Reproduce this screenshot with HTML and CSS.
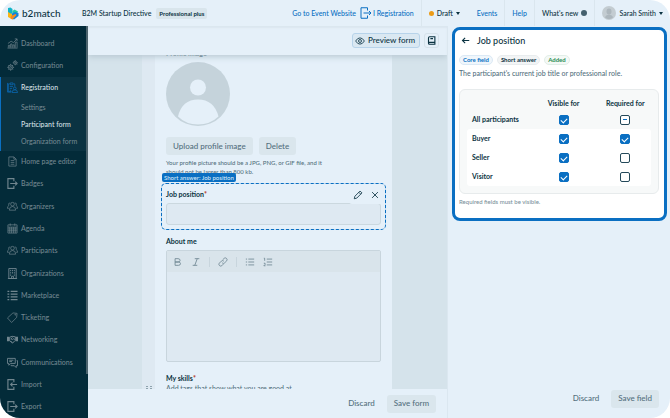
FILE: index.html
```html
<!DOCTYPE html>
<html lang="en">
<head>
    <meta charset="UTF-8">
    <meta name="viewport" content="width=device-width, initial-scale=1.0">
    <title>b2match - Participant form</title>
    <link rel="stylesheet" href="styles.css">
</head>
<body>
    <div class="app">
        <header class="topbar">
            <a class="brand" href="#">
                <svg class="brand-logo" viewBox="0 0 24 26">
                    <path d="M2 2l5-1 4 3v9l-9 3z" fill="#12b5c9"/>
                    <path d="M11 8l4-3 7 4-3 6-8-2z" fill="#25c7a0"/>
                    <path d="M2 10l9 5v10l-9-5z" fill="#fcb514"/>
                    <path d="M10 13l6-3 7 2v6l-9 7-4-2z" fill="#1184dd"/>
                    <path d="M8 18l9-4 2 2-8 9-4-2z" fill="#f58a1f"/>
                </svg>
                <span>b2match</span>
            </a>
            <span class="event-name">B2M Startup Directive</span>
            <span class="plan">Professional plus</span>
            <nav class="topnav">
                <div class="topnav-item">
                    <a href="#">Go to Event Website</a>
                    <a class="registration-link" href="#">
                        <svg class="exit-icon" viewBox="0 0 24 24"><path d="M15 7V1.500H2v21h13V17M7 12h15M18 8l4 4-4 4"/></svg>
                        <span>I Registration</span>
                    </a>
                </div>
                <div class="topnav-item status-item"><button class="menu-btn"><i class="dot draft-dot"></i>Draft<i class="caret"></i></button></div>
                <div class="topnav-item"><a href="#">Events</a></div>
                <div class="topnav-item"><a href="#">Help</a></div>
                <div class="topnav-item"><button class="menu-btn">What's new<i class="dot"></i></button></div>
                <div class="topnav-item user-item">
                    <button class="menu-btn">
                        <svg class="user-pic" viewBox="0 0 28 28"><circle cx="14" cy="14" r="14" fill="#c3ccd1"/><ellipse cx="14" cy="11" rx="5" ry="6" fill="#adb7bd"/><path d="M6 23q1-5 8-6 7 1 8 6-8 6-16 0z" fill="#adb7bd"/></svg>
                        Sarah Smith<i class="caret"></i>
                    </button>
                </div>
            </nav>
        </header>

        <nav class="sidebar">
            <a class="nav-item" href="#"><svg viewBox="0 0 24 24"><path d="M1 22h22M3 21v-5h3v5M8 21v-8h3v8M13 21v-6h3v6M18 21V9h4v12M2 12l7-5 5 3 8-8M17 2h5v5"/></svg>Dashboard</a>
            <a class="nav-item" href="#"><svg viewBox="0 0 24 24"><circle cx="8" cy="16" r="5"/><circle cx="8" cy="16" r="2"/><path d="M8 8.500v3M8 20.500v3M.5 16h3M12.500 16h3M3 11l2 2M11 19l2 2M3 21l2-2M11 13l2-2"/><circle cx="18" cy="6" r="3.500"/><circle cx="18" cy="6" r="1"/><path d="M18 .5v2M18 9.500v2M12.500 6h2M21.500 6h2M14 2l1.500 1.500M20.500 8.500L22 10"/></svg>Configuration</a>
            <div class="nav-group">
                <a class="nav-item active" href="#"><svg viewBox="0 0 24 24"><path d="M10 21H3V4h3M14 4h3v6M7 2h6v4H7zM6 10h7M6 14h5M6 18h3M1 2v20h8"/><circle cx="17" cy="14" r="3"/><path d="M11 23q0-6 6-6t6 6z"/></svg>Registration</a>
                <a class="sub-item" href="#">Settings</a>
                <a class="sub-item current" href="#">Participant form</a>
                <a class="sub-item" href="#">Organization form</a>
            </div>
            <a class="nav-item" href="#"><svg viewBox="0 0 24 24"><path d="M4 2h11l5 5v15H4zM15 2v5h5M8 10h8M8 14h8M8 18h8"/></svg>Home page editor</a>
            <a class="nav-item" href="#"><svg viewBox="0 0 24 24"><path d="M15 7V1.500H2v21h13V17M7 12h15M18 8l4 4-4 4" stroke-width="2.500"/></svg>Badges</a>
            <a class="nav-item" href="#"><svg viewBox="0 0 24 24"><circle cx="12" cy="7" r="4"/><path d="M5 20q0-8 7-8t7 8zM7 4Q2 4 4 10q-3 1-3 6h3M17 4q5 0 3 6 3 1 3 6h-3"/></svg>Organizers</a>
            <a class="nav-item" href="#"><svg viewBox="0 0 24 24"><path d="M2 4h20v18H2zM2 9h20M7 1v5M17 1v5M2 13h20M2 17h20M6 9v13M10 9v13M14 9v13M18 9v13"/></svg>Agenda</a>
            <a class="nav-item" href="#"><svg viewBox="0 0 24 24"><circle cx="12" cy="7" r="4"/><path d="M5 20q0-8 7-8t7 8zM7 4Q2 4 4 10q-3 1-3 6h3M17 4q5 0 3 6 3 1 3 6h-3"/></svg>Participants</a>
            <a class="nav-item" href="#"><svg viewBox="0 0 24 24"><path d="M4 23V1h16v22zM2 23h20M8 4v3M12 4v3M16 4v3M8 9v3M12 9v3M16 9v3M8 14v3M16 14v3M10 23v-5h4v5" stroke-width="2"/></svg>Organizations</a>
            <a class="nav-item" href="#"><svg viewBox="0 0 24 24"><path d="M1 3h4M1 9h4M1 15h4M1 21h4M8 3h15M8 9h15M8 15h15M8 21h15" stroke-width="2.500"/></svg>Marketplace</a>
            <a class="nav-item" href="#"><svg viewBox="0 0 24 24"><path d="M1 13L13 2l9 1-1 9L10 23z"/><circle cx="18" cy="6" r="1"/></svg>Ticketing</a>
            <a class="nav-item" href="#"><svg viewBox="0 0 24 24"><path d="M1 6v10M4 6v10M20 6v10M23 6v10" stroke-width="3"/><path d="M6 7l5-2 7 1v8l-6 6-6-5zM12 7l-3 4 3 1 3-2 4 4M9 17l2-2M12 19l2-2" stroke-width="2"/></svg>Networking</a>
            <a class="nav-item" href="#"><svg viewBox="0 0 24 24"><path d="M1 3h17v11H8l-4 4v-4H1zM21 8h2v11h-3v4l-4-4H9v-2M5 7h9M5 10h6" stroke-width="2"/></svg>Communications</a>
            <a class="nav-item" href="#"><svg viewBox="0 0 24 24"><path d="M15 7V1.500H2v21h13V17M22 12H8M12 8l-4 4 4 4" stroke-width="2.500"/></svg>Import</a>
            <a class="nav-item" href="#"><svg viewBox="0 0 24 24"><path d="M15 7V1.500H2v21h13V17M7 12h15M18 8l4 4-4 4" stroke-width="2.500"/></svg>Export</a>
            <span class="scroll-thumb"></span>
        </nav>

        <main class="editor">
            <div class="editor-bar">
                <button class="preview-btn">
                    <svg viewBox="0 0 24 24"><path d="M1.500 12Q6 4.500 12 4.500T22.500 12Q18 19.500 12 19.500T1.500 12z"/><circle cx="12" cy="12" r="3.500"/></svg>
                    Preview form
                </button>
                <button class="guide-btn" aria-label="Guide">
                    <svg viewBox="0 0 24 24"><path d="M4 19V5q0-3 3-3h14v15H6.500q-2.500 0-2.500 2.500T6.500 22H21v-5M9 7h7"/></svg>
                </button>
            </div>

            <div class="canvas">
                <div class="gutter">
                    <svg class="grip" viewBox="0 0 6 3"><path d="M0 .5h2M4 .5h2M0 2.500h2M4 2.500h2"/></svg>
                </div>
                <form class="form" id="participant-form">
                    <span class="label clipped-label">Profile image</span>
                    <svg class="profile-pic" viewBox="0 0 64 64">
                        <circle cx="32" cy="32" r="32" fill="#c5d3db"/>
                        <circle cx="32" cy="25.500" r="8" fill="#e5f0f9"/>
                        <path d="M12 54.500Q16 37.500 32 37.500T52.500 54.500Q44 62.500 32 62.500T12 54.500z" fill="#e5f0f9"/>
                    </svg>
                    <div class="upload-row">
                        <button type="button" class="btn muted">Upload profile image</button>
                        <button type="button" class="btn muted">Delete</button>
                    </div>
                    <p class="hint">Your profile picture should be a JPG, PNG, or GIF file, and it should not be larger than 800 kb.</p>

                    <div class="field selected">
                        <span class="field-tag">Short answer: Job position</span>
                        <label class="label" for="job">Job position<b>*</b></label>
                        <input class="text-input" id="job" type="text">
                        <div class="field-tools">
                            <button type="button" aria-label="Edit"><svg viewBox="0 0 24 24"><path d="M3 21l1.500-6L17 2.500l4.500 4.500L9 19.500zM14 5.500l4.500 4.500"/></svg></button>
                            <button type="button" aria-label="Remove"><svg viewBox="0 0 24 24"><path d="M5 5l14 14M19 5L5 19"/></svg></button>
                        </div>
                    </div>

                    <label class="label" for="about">About me</label>
                    <div class="rich-text">
                        <div class="rich-bar">
                            <button type="button" aria-label="Bold"><svg viewBox="0 0 24 24"><path d="M5 4h7q5 0 5 4t-5 4H5zM5 12h8q5 0 5 4t-5 4H5z"/></svg></button>
                            <button type="button" aria-label="Italic"><svg viewBox="0 0 24 24"><path d="M9 4h11M4 20h11M15 4L9 20"/></svg></button>
                            <i class="bar-line"></i>
                            <button type="button" aria-label="Link"><svg viewBox="0 0 24 24"><path d="M10 14q3 3 6 0l5-5q2-3-.5-5.500T15 3l-4 4M14 10q-3-3-6 0l-5 5q-2 3 .5 5.500T9 21l4-4"/></svg></button>
                            <i class="bar-line"></i>
                            <button type="button" aria-label="Bullet list"><svg viewBox="0 0 24 24"><path d="M2 5h3M2 12h3M2 19h3M8 5h14M8 12h14M8 19h14"/></svg></button>
                            <button type="button" aria-label="Numbered list"><svg viewBox="0 0 24 24"><path d="M2 3h2v6M2 15h3v3l-3 3h4M9 5h13M9 12h13M9 19h13"/></svg></button>
                        </div>
                        <textarea class="rich-area" id="about"></textarea>
                    </div>

                    <span class="label">My skills<b>*</b></span>
                    <p class="hint skills-hint">Add tags that show what you are good at</p>
                </form>
            </div>

            <div class="editor-footer">
                <button class="btn">Discard</button>
                <button class="btn muted" form="participant-form">Save form</button>
            </div>
        </main>

        <aside class="panel">
            <section class="field-card">
                <div class="card-title">
                    <button aria-label="Back"><svg viewBox="0 0 24 24"><path d="M22 12H4M11 5l-7 7 7 7"/></svg></button>
                    <h2>Job position</h2>
                </div>
                <div class="chips">
                    <span class="chip chip-blue">Core field</span>
                    <span class="chip">Short answer</span>
                    <span class="chip chip-green">Added</span>
                </div>
                <p class="description">The participant's current job title or professional role.</p>
                <div class="rules">
                    <table>
                        <thead>
                            <tr><td></td><th>Visible for</th><th>Required for</th></tr>
                            <tr>
                                <th>All participants</th>
                                <td><input type="checkbox" aria-label="Visible for all participants" checked></td>
                                <td><input type="checkbox" class="partial" aria-label="Required for all participants"></td>
                            </tr>
                        </thead>
                        <tbody>
                            <tr>
                                <th>Buyer</th>
                                <td><input type="checkbox" aria-label="Visible for buyer" checked></td>
                                <td><input type="checkbox" aria-label="Required for buyer" checked></td>
                            </tr>
                            <tr>
                                <th>Seller</th>
                                <td><input type="checkbox" aria-label="Visible for seller" checked></td>
                                <td><input type="checkbox" aria-label="Required for seller"></td>
                            </tr>
                            <tr>
                                <th>Visitor</th>
                                <td><input type="checkbox" aria-label="Visible for visitor" checked></td>
                                <td><input type="checkbox" aria-label="Required for visitor"></td>
                            </tr>
                        </tbody>
                    </table>
                </div>
                <p class="note">Required fields must be visible.</p>
            </section>
            <div class="panel-footer">
                <button class="btn">Discard</button>
                <button class="btn muted">Save field</button>
            </div>
        </aside>
    </div>
</body>
</html>
```
FILE: styles.css
```css
* {
    box-sizing: border-box;
}

body {
    margin: 0;
    background-color: #fff;
    font-family: Lato, "Open Sans", sans-serif;
    font-size: 7px;
    font-weight: 500;
    line-height: 9px;
    color: #0b3342;
}

a {
    color: #0a6fc2;
    text-decoration: none;
}

p, h2 {
    margin: 0;
}

button {
    border: 0;
    padding: 0;
    background: none;
    font: inherit;
    color: inherit;
    cursor: pointer;
}

svg {
    flex: none;
    fill: none;
    stroke: currentColor;
    stroke-width: 2;
}

.app {
    display: grid;
    grid-template-columns: 88px 1fr 223px;
    grid-template-rows: 26px 1fr;
    height: 100vh;
    border-radius: 20px;
    overflow: hidden;
    background-color: #e5f0f9;
}

/* top bar */
.topbar {
    grid-column: 1 / -1;
    display: flex;
    align-items: center;
    padding-left: 7px;
}

.brand {
    display: flex;
    align-items: center;
    gap: 3px;
    width: 75px;
    font-size: 10px;
    color: #0b3342;
}

.brand-logo {
    width: 12px;
    height: 13px;
    stroke: none;
}

.plan {
    margin-left: 5px;
    padding: 1px 3px;
    border-radius: 2px;
    background-color: #d9e5ec;
    font-size: 6px;
    font-weight: 700;
}

.topnav {
    display: flex;
    align-self: stretch;
    margin-left: auto;
}

.topnav-item {
    display: flex;
    align-items: center;
    gap: 4px;
    padding: 0 7px;
    border-right: 1px solid #dae6ee;
}

.status-item {
    padding-right: 10px;
    border-right: 0;
}

.registration-link,
.menu-btn {
    display: flex;
    align-items: center;
    gap: 3px;
}

.registration-link {
    gap: 1px;
}

.exit-icon {
    width: 12px;
    height: 12px;
}

.dot {
    width: 6px;
    height: 6px;
    border-radius: 50%;
    background-color: #44606e;
}

.draft-dot {
    width: 5px;
    height: 5px;
    background-color: #eb9b17;
}

.caret {
    border: 2px solid transparent;
    border-top: 3px solid #0b3342;
    border-bottom: 0;
}

.user-item {
    border-right: 0;
}

.user-pic {
    width: 14px;
    height: 14px;
    stroke: none;
}

/* sidebar */
.sidebar {
    position: relative;
    display: flex;
    flex-direction: column;
    padding-top: 6px;
    background-color: #032b39;
}

.nav-item,
.sub-item {
    display: flex;
    align-items: center;
    flex: 22 1 0;
    gap: 3px;
    padding-left: 7px;
    color: #71868f;
}

.nav-item svg {
    width: 11px;
    height: 11px;
    stroke-width: 1.500;
}

.nav-group {
    display: flex;
    flex-direction: column;
    flex: 73 1 0;
    border-left: 1px solid #0a6fc2;
    background-color: #0b3342;
}

.nav-group .nav-item {
    padding-left: 6px;
}

.sub-item {
    flex: 17 1 0;
    padding-left: 20px;
}

.active,
.current {
    color: #d6e0e6;
}

.active svg {
    color: #0a6fc2;
}

.scroll-thumb {
    position: absolute;
    top: 0;
    right: 0;
    bottom: 44px;
    width: 2px;
    background-color: #4c636d;
}

/* form editor */
.editor {
    display: flex;
    flex-direction: column;
    min-height: 0;
    overflow: hidden;
}

.editor-bar {
    position: relative;
    display: flex;
    align-items: center;
    justify-content: flex-end;
    gap: 4px;
    height: 29px;
    padding-right: 8px;
    background-color: #e5f0f9;
    box-shadow: 0 2px 6px #b9c9d3, inset 0 2px 2px #dbe6ef;
}

.preview-btn,
.guide-btn {
    display: flex;
    align-items: center;
    justify-content: center;
    gap: 3px;
    height: 15px;
    padding: 0 4px 0 2px;
    border: 1px solid #b7d3ea;
    border-radius: 3px;
    background-color: #dae8f2;
    font-size: 8px;
}

.guide-btn {
    width: 15px;
    padding: 0;
    border-color: #d5e2ea;
    background-color: #e5f0f9;
}

.preview-btn svg {
    width: 10px;
    height: 10px;
}

.guide-btn svg {
    width: 9px;
    height: 9px;
    stroke-width: 3;
}

.canvas {
    display: flex;
    flex: 1;
    min-height: 0;
    padding: 0 55px 0 54px;
    overflow: hidden;
    background-color: #d5e3eb;
}

.gutter {
    display: flex;
    align-items: flex-end;
    justify-content: center;
    width: 13px;
    background-color: #dee9f2;
    color: #8ea3ae;
}

.grip {
    width: 6px;
    height: 3px;
    stroke-width: 1;
}

.form {
    flex: 1;
    padding: 0 11px;
    background-color: #e5f0f9;
}

.label {
    display: block;
    font-weight: 700;
}

.label b {
    color: #b5422c;
}

.clipped-label {
    margin-top: -6px;
}

.profile-pic {
    display: block;
    width: 64px;
    height: 64px;
    margin-top: 4px;
    stroke: none;
}

.upload-row {
    display: flex;
    gap: 6px;
    margin: 11px 0 3px;
}

.btn {
    height: 18px;
    padding: 0 7px;
    border-radius: 3px;
    font-size: 8px;
    color: #54707e;
}

.muted {
    background-color: #dae6ed;
}

.hint {
    width: 160px;
    font-size: 6px;
    color: #54707e;
}

.field {
    position: relative;
    margin: 7px -5px;
    padding: 7px 5px 5px;
    border-radius: 4px;
}

.selected {
    border-radius: 5px;
    outline: 1px dashed #0a6fc2;
    outline-offset: -1px;
    box-shadow: inset 0 0 0 1px #bcd8ef;
}

.field-tag {
    position: absolute;
    top: -10px;
    left: 1px;
    padding: 0 2px;
    border-radius: 2px;
    background-color: #0a6fc2;
    font-size: 6px;
    color: #d9ebf8;
}

.text-input {
    display: block;
    width: 100%;
    height: 22px;
    margin-top: 4px;
    border: 1px solid #cbd8df;
    border-radius: 3px;
    background-color: #dee9f2;
}

.field-tools {
    position: absolute;
    top: 2px;
    right: 2px;
    display: flex;
    align-items: center;
    gap: 7px;
    height: 19px;
    padding: 0 4px;
    border-radius: 3px;
    background-color: #e5f0f9;
}

.field-tools svg {
    display: block;
    width: 10px;
    height: 10px;
}

.rich-text {
    margin: 4px 0 12px;
    border: 1px solid #c8d5dd;
    border-radius: 2px;
    background-color: #dee9f2;
}

.rich-bar {
    display: flex;
    align-items: center;
    gap: 8px;
    height: 21px;
    padding-left: 6px;
    background-color: #d9e4eb;
    color: #6c8490;
}

.rich-bar svg {
    display: block;
    width: 10px;
    height: 10px;
}

.bar-line {
    width: 1px;
    height: 10px;
    background-color: #c8d5dd;
}

.rich-area {
    display: block;
    width: 100%;
    height: 89px;
    border: 0;
    background: none;
    resize: none;
}

.skills-hint {
    margin-top: 1px;
    font-size: 7px;
}

.editor-footer,
.panel-footer {
    display: flex;
    align-items: center;
    justify-content: flex-end;
    gap: 5px;
    height: 29px;
    padding-right: 11px;
}

/* field settings */
.panel {
    display: flex;
    flex-direction: column;
    padding: 1px 3px 5px 4px;
    border-left: 1px solid #dbe7f0;
}

.panel-footer {
    margin-top: auto;
    padding-right: 8px;
}

.field-card {
    padding: 6px 5px 12px 4px;
    border: 3px solid #0a6fc2;
    border-radius: 8px;
    background-color: #fff;
}

.card-title {
    display: flex;
    align-items: center;
    gap: 7px;
    padding-left: 2px;
}

.card-title svg {
    display: block;
    width: 9px;
    height: 9px;
    stroke-width: 3;
}

.card-title h2 {
    font-size: 9px;
    font-weight: 500;
}

.chips {
    display: flex;
    gap: 4px;
    margin-top: 10px;
}

.chip {
    padding: 0 3px;
    border: 1px solid #e8ecee;
    border-radius: 5px;
    background-color: #f2f4f5;
    font-size: 6px;
    font-weight: 700;
    line-height: 8px;
}

.chip-blue {
    border-color: #dbe9f5;
    background-color: #f0f6fb;
    color: #0a6fc2;
}

.chip-green {
    border-color: #e2eee8;
    background-color: #f4f9f6;
    color: #1f8a50;
}

.description {
    margin-top: 4px;
    color: #54707e;
}

.rules {
    margin: 11px 0 3px;
    padding: 7px;
    border: 1px solid #e7ebec;
    border-radius: 6px;
    background-color: #f7f9f9;
}

.rules table {
    width: 100%;
    border-spacing: 0;
    table-layout: fixed;
}

.rules tr {
    height: 19px;
}

.rules thead tr:first-child {
    height: 13px;
}

.rules td,
.rules th {
    width: 28%;
    padding: 0;
    text-align: center;
}

.rules td:nth-child(2),
.rules th:nth-child(2) {
    width: 39%;
}

.rules tr > :first-child {
    width: 33%;
    padding-left: 5px;
    text-align: left;
    white-space: nowrap;
}

.rules tbody td,
.rules tbody th {
    background-color: #fff;
}

.rules tbody tr:first-child th {
    border-top-left-radius: 3px;
}

.rules tbody tr:first-child td:last-child {
    border-top-right-radius: 3px;
}

.rules tbody tr:last-child th {
    border-bottom-left-radius: 3px;
}

.rules tbody tr:last-child td:last-child {
    border-bottom-right-radius: 3px;
}

.rules input {
    appearance: none;
    display: block;
    width: 10px;
    height: 10px;
    margin: 0 auto;
    border: 1px solid #24495a;
    border-radius: 2px;
    background-color: #fff;
}

.rules input:checked {
    border-color: #0a6fc2;
    background-color: #0a6fc2;
}

.rules input:checked::after {
    content: "";
    display: block;
    width: 5px;
    height: 3px;
    margin: 2px 1px;
    border: solid #fff;
    border-width: 0 0 1px 1px;
    transform: rotate(-45deg);
}

.rules .partial::after {
    content: "";
    display: block;
    width: 4px;
    height: 1px;
    margin: 3px 2px;
    background-color: #0a6fc2;
}

.note {
    font-size: 6px;
    color: #7c919b;
}
```
